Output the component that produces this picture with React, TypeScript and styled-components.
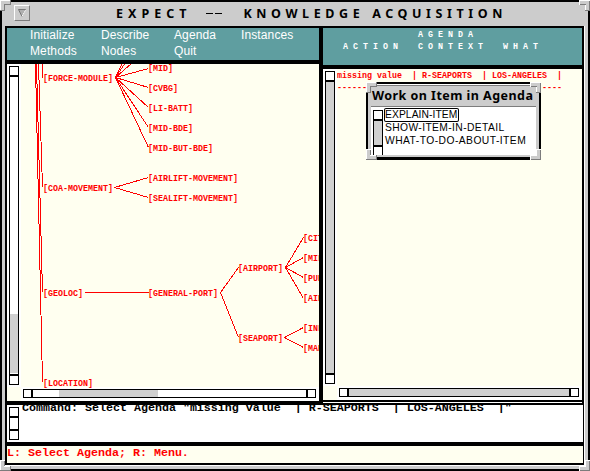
import React from 'react';
import styled, { createGlobalStyle, css } from 'styled-components';

const C = { gray: '#cccccc', thumb: '#d0d0d0', ivory: '#fffff0', teal: '#5f9ea0', red: '#ff0000', dark: '#7c7c7c' };

const Global = createGlobalStyle`
  * { box-sizing: border-box; }
  html, body { margin: 0; padding: 0; overflow: hidden; background: #000; }
`;

const Window = styled.main`
  position: relative;
  width: 590px;
  height: 471px;
  padding: 2px;
  background: #000;
  display: flex;
  flex-direction: column;
  overflow: hidden;
`;
const TitleBar = styled.header`
  flex: 0 0 24px;
  background: ${C.gray};
  display: flex;
  padding: 3px 0 0 12px;
`;
const MenuButton = styled.button`
  width: 16px;
  height: 16px;
  padding: 0;
  border: 1px solid;
  border-color: #fff ${C.dark} ${C.dark} #fff;
  background: ${C.gray};
  display: block;
`;
const MenuGlyph = styled.svg`
  display: block;
  width: 14px;
  height: 14px;
`;
const Title = styled.h1<{ $gap: number; $space: number }>`
  margin: 0 0 0 ${p => p.$gap}px;
  font: bold 12.5px/17px 'Noto Sans', sans-serif;
  letter-spacing: ${p => p.$space}px;
  white-space: pre;
`;
const TitleDash = styled.span`
  width: 16px;
  height: 1px;
  margin: 8px 0 0 15px;
  background: linear-gradient(90deg, #000 7px, transparent 7px, transparent 9px, #000 9px);
`;
const Frame = styled.div`
  flex: 0 0 443px;
  background: ${C.gray};
  padding: 0 3px;
`;
const Client = styled.div`
  width: 580px;
  height: 440px;
  background: #000;
  border-right: 1px solid #fff;
  border-bottom: 1px solid #fff;
  padding: 2px 0 0 2px;
  display: flex;
  flex-direction: column;
`;
const Panes = styled.div`
  flex: 0 0 377px;
  display: flex;
  gap: 4px;
`;
const Left = styled.section`
  width: 312px;
  height: 373px;
  display: flex;
  flex-direction: column;
  gap: 4px;
`;
const Right = styled.section`
  width: 259px;
  height: 375px;
  padding-bottom: 2px;
  display: flex;
  flex-direction: column;
  gap: 4px;
  border-bottom: 1px solid #fff;
`;
const Menu = styled.nav`
  height: 32px;
  background: ${C.teal};
  color: #fff;
  display: grid;
  grid-template-columns: 71px 73px 67px 70px;
  grid-template-rows: 16px 16px;
  padding-left: 23px;
  font: 12px/15px 'Liberation Sans', sans-serif;
  letter-spacing: 0.12px;
`;
const smallMono = css`
  font: bold 8.33px/10px 'Liberation Mono', monospace;
  white-space: pre;
`;
const AgendaHead = styled.header`
  ${smallMono}
  height: 37px;
  background: ${C.teal};
  color: #fff;
  letter-spacing: 5px;
  padding: 2px 0 0 20px;
  display: grid;
  grid-template-columns: 75px 85px 60px;
  grid-template-rows: 12px 12px;
`;
const HeadCell = styled.span<{ $col: number }>`
  grid-column: ${p => p.$col};
`;
const Pane = styled.div<{ $bars: string }>`
  flex: 1;
  min-height: 0;
  background: ${C.ivory};
  display: grid;
  grid-template: ${p => p.$bars};
`;
const Gutter = styled.div<{ $pad: string }>`
  background: #fff;
  padding: ${p => p.$pad};
  display: flex;
`;
const Bar = styled.div<{ $vertical?: boolean }>`
  flex: ${p => (p.$vertical ? '0 0 10px' : '1')};
  min-width: 0;
  border: 1px solid #000;
  background: #fff;
  display: flex;
  flex-direction: ${p => (p.$vertical ? 'column' : 'row')};
`;
const DialogBar = styled(Bar)`
  border-bottom: 0;
`;
const Cap = styled.i<{ $vertical?: boolean; $size?: number; $last?: boolean }>`
  flex: 0 0 ${p => p.$size ?? 10}px;
  border: 0 solid #000;
  ${p => {
    const side = p.$vertical ? (p.$last ? 'top' : 'bottom') : p.$last ? 'left' : 'right';
    return `border-${side}-width: 2px;`;
  }}
`;
const Track = styled.i<{ $from: number; $to: number; $vertical?: boolean }>`
  flex: 1;
  background: linear-gradient(
    ${p => (p.$vertical ? '180deg' : '90deg')},
    transparent ${p => p.$from}px,
    ${C.thumb} ${p => p.$from}px,
    ${C.thumb} ${p => p.$to}px,
    transparent ${p => p.$to}px
  );
`;
const Canvas = styled.div`
  position: relative;
  clip-path: inset(0 0 -2px 0);
`;
const Edges = styled.svg`
  position: absolute;
  inset: 0;
  width: 298px;
  height: 323px;
  stroke: ${C.red};
  stroke-width: 1;
  fill: none;
  shape-rendering: crispEdges;
`;
const Node = styled.span<{ $x: number; $y: number }>`
  ${smallMono}
  position: absolute;
  left: ${p => p.$x - 21}px;
  top: ${p => p.$y - 68}px;
  color: ${C.red};
`;
const AgendaList = styled.div`
  ${smallMono}
  color: ${C.red};
  padding: 2px 0 0 0;
  display: flex;
  flex-direction: column;
  gap: 2px;
  overflow: hidden;
`;
const Command = styled.section`
  flex: 0 0 37px;
  width: 576px;
  background: #fff;
  display: flex;
  overflow: hidden;
`;
const largeMono = css`
  font: bold 11.67px/14px 'Liberation Mono', monospace;
  white-space: pre;
`;
const CommandText = styled.div`
  ${largeMono}
  height: 37px;
  margin-left: 1px;
  overflow: hidden;
`;
const CommandLine = styled.div`
  margin-top: -4px;
`;
const Status = styled.footer`
  ${largeMono}
  margin-top: 4px;
  width: 576px;
  height: 17px;
  background: ${C.ivory};
  color: ${C.red};
`;
const Dialog = styled.section`
  position: absolute;
  left: 366px;
  top: 82px;
  width: 175px;
  height: 78px;
  padding: 2px 2px 3px;
  background: #000;
`;
const DialogBody = styled.div`
  height: 73px;
  padding: 1px 3px 2px;
  background: ${C.gray};
`;
const DialogTitle = styled.h2`
  height: 22px;
  margin: 0;
  padding-left: 1px;
  border-top: 1px solid ${C.dark};
  border-bottom: 1px solid ${C.dark};
  box-shadow: 0 1px #fff, 0 -1px #fff;
  font: bold 12.5px/20px 'Noto Sans', sans-serif;
  letter-spacing: 0.46px;
  white-space: nowrap;
`;
const DialogContent = styled.div`
  height: 47px;
  margin-top: 1px;
  padding: 2px 0 0 2px;
  background: #fff;
  display: flex;
  gap: 2px;
`;
const Items = styled.div`
  display: flex;
  flex-direction: column;
  align-items: flex-start;
  margin-top: -1px;
  font: 10.3px/12px 'Liberation Sans', sans-serif;
`;
const Item = styled.div<{ $active?: boolean; $space: number }>`
  height: 12px;
  margin-bottom: 1px;
  padding-right: 1px;
  white-space: nowrap;
  letter-spacing: ${p => p.$space}px;
  box-shadow: ${p => (p.$active ? '0 0 0 1px #000' : 'none')};
  border-radius: 1px;
`;
const CornerSvg = styled.svg<{ $x: number; $y: number; $flip: string }>`
  position: absolute;
  left: ${p => p.$x}px;
  top: ${p => p.$y}px;
  width: 11px;
  height: 11px;
  transform: scale(${p => p.$flip});
  shape-rendering: crispEdges;
`;

function Corner({ x, y, flip = '1, 1' }: { x: number; y: number; flip?: string }) {
  const [fx, fy] = flip.split(',').map(Number);
  const outerX = fx > 0 ? '#fff' : C.dark;
  const outerY = fy > 0 ? '#fff' : C.dark;
  const innerX = fx > 0 ? C.dark : '#fff';
  const innerY = fy > 0 ? C.dark : '#fff';
  return (
    <CornerSvg $x={x} $y={y} $flip={flip} viewBox="0 0 11 11">
      <path d="M0 0H11V5H5V11H0Z" fill={C.gray} />
      <path d="M.5 0V11" stroke={outerX} />
      <path d="M0 .5H11" stroke={outerY} />
      <path d="M4.5 4V11" stroke={innerX} />
      <path d="M4 4.5H11" stroke={innerY} />
      <path d="M10.5 0V5" stroke={innerX} />
      <path d="M0 10.5H5" stroke={innerY} />
    </CornerSvg>
  );
}

const edges = [
  [115, 77, 148, 8], [115, 77, 148, 28], [115, 77, 148, 48], [115, 77, 148, 68], [115, 77, 148, 87],
  [115, 77, 148, 107], [115, 77, 148, 127], [115, 77, 148, 147], [114, 187, 148, 177], [114, 187, 148, 197],
  [42, 63, 42, 77], [38, 64, 42, 187], [36, 64, 42, 292], [35, 64, 42, 382], [84, 292, 148, 292],
  [220, 292, 238, 267], [220, 292, 238, 337], [285, 267, 303, 237], [285, 267, 303, 257],
  [285, 267, 303, 277], [285, 267, 303, 298], [284, 337, 303, 327], [284, 337, 303, 347],
];
const nodes: [string, number, number][] = [
  ['[FORCE-MODULE]', 43, 78], ['[MID]', 148, 68], ['[CVBG]', 148, 88], ['[LI-BATT]', 148, 108],
  ['[MID-BDE]', 148, 128], ['[MID-BUT-BDE]', 148, 148], ['[COA-MOVEMENT]', 43, 188],
  ['[AIRLIFT-MOVEMENT]', 148, 178], ['[SEALIFT-MOVEMENT]', 148, 198], ['[GEOLOC]', 43, 293],
  ['[GENERAL-PORT]', 148, 293], ['[AIRPORT]', 238, 268], ['[SEAPORT]', 238, 338], ['[CIT', 303, 238],
  ['[MIL', 303, 258], ['[PUB', 303, 278], ['[AIR', 303, 298], ['[INL', 303, 328], ['[MAR', 303, 348],
  ['[LOCATION]', 43, 383],
];

export default function App() {
  return (
    <>
      <Global />
      <Window>
        <TitleBar>
          <MenuButton aria-label="Window menu">
            <MenuGlyph viewBox="0 0 14 14">
              <path d="M3.5 3.5H10.5L7 10.5Z" fill="#b0b0b0" stroke="#777" />
              <path d="M10.5 4L7 10.5" stroke="#fff" />
            </MenuGlyph>
          </MenuButton>
          <Title $gap={86} $space={5}>EXPECT</Title>
          <TitleDash />
          <Title $gap={21} $space={4.6}>KNOWLEDGE ACQUISITION</Title>
        </TitleBar>
        <Frame>
          <Client>
            <Panes>
              <Left>
                <Menu>
                  <span>Initialize</span><span>Describe</span><span>Agenda</span><span>Instances</span>
                  <span>Methods</span><span>Nodes</span><span>Quit</span>
                </Menu>
                <Pane $bars="323px 14px / 14px 298px">
                  <Gutter $pad="2px">
                    <Bar $vertical>
                      <Cap $vertical />
                      <Track $vertical $from={237} $to={296} />
                      <Cap $vertical $last />
                    </Bar>
                  </Gutter>
                  <Canvas>
                    <Edges viewBox="21 64 298 323">
                      {edges.map(([a, b, c, d], i) => (
                        <path key={i} d={`M${a + 0.5} ${b + 0.5}L${c + 0.5} ${d + 0.5}`} />
                      ))}
                    </Edges>
                    {nodes.map(([label, x, y]) => <Node key={label} $x={x} $y={y}>{label}</Node>)}
                  </Canvas>
                  <span />
                  <Gutter $pad="2px 3px 3px 2px">
                    <Bar>
                      <Cap $size={9} />
                      <Track $from={26} $to={125} />
                      <Cap $size={9} $last />
                    </Bar>
                  </Gutter>
                </Pane>
              </Left>
              <Right>
                <AgendaHead>
                  <HeadCell $col={2}>AGENDA</HeadCell>
                  <HeadCell $col={1}>ACTION</HeadCell>
                  <HeadCell $col={2}>CONTEXT</HeadCell>
                  <HeadCell $col={3}>WHAT</HeadCell>
                </AgendaHead>
                <Pane $bars="317px 14px / 14px 245px">
                  <Gutter $pad="2px">
                    <Bar $vertical>
                      <Cap $vertical />
                      <Track $vertical $from={0} $to={400} />
                      <Cap $vertical $last />
                    </Bar>
                  </Gutter>
                  <AgendaList>
                    <span>missing value  | R-SEAPORTS  | LOS-ANGELES  |</span>
                    <span>{'-'.repeat(45)}</span>
                  </AgendaList>
                  <span />
                  <Gutter $pad="2px 3px 3px 2px">
                    <Bar>
                      <Cap $size={9} />
                      <Track $from={0} $to={400} />
                      <Cap $size={9} $last />
                    </Bar>
                  </Gutter>
                </Pane>
              </Right>
            </Panes>
            <Command>
              <Gutter $pad="2px">
                <Bar $vertical>
                  <Cap $vertical />
                  <Track $vertical $from={0} $to={0} />
                  <Cap $vertical $last />
                </Bar>
              </Gutter>
              <CommandText>
                <CommandLine>{'Command: Select Agenda "missing value  | R-SEAPORTS  | LOS-ANGELES  |"'}</CommandLine>
              </CommandText>
            </Command>
            <Status>L: Select Agenda; R: Menu.</Status>
          </Client>
        </Frame>
        <Dialog role="dialog">
          <DialogBody>
            <DialogTitle>Work on Item in Agenda</DialogTitle>
            <DialogContent>
              <DialogBar $vertical>
                <Cap $vertical />
                <Track $vertical $from={0} $to={40} />
                <Cap $vertical $last />
              </DialogBar>
              <Items>
                <Item $active $space={0.08}>EXPLAIN-ITEM</Item>
                <Item $space={0.38}>SHOW-ITEM-IN-DETAIL</Item>
                <Item $space={0.45}>WHAT-TO-DO-ABOUT-ITEM</Item>
              </Items>
            </DialogContent>
          </DialogBody>
          <Corner x={0} y={0} />
          <Corner x={164} y={0} flip="-1, 1" />
          <Corner x={0} y={67} flip="1, -1" />
          <Corner x={164} y={67} flip="-1, -1" />
        </Dialog>
        <Corner x={0} y={0} />
        <Corner x={579} y={0} flip="-1, 1" />
        <Corner x={0} y={460} flip="1, -1" />
        <Corner x={579} y={460} flip="-1, -1" />
      </Window>
    </>
  );
}
